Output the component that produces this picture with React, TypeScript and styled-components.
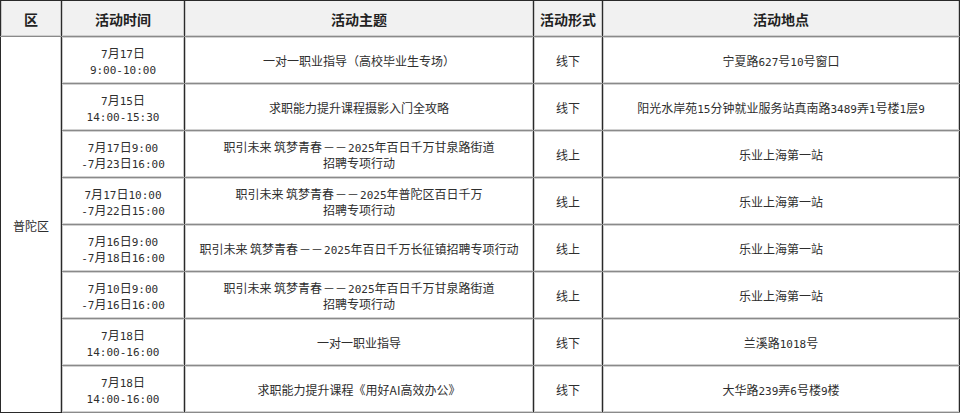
import React from "react";
import styled, { createGlobalStyle } from "styled-components";

const Global = createGlobalStyle`
  html, body { margin: 0; padding: 0; background: #fff; }
  body { font-family: "Noto Sans CJK SC", "Liberation Sans", sans-serif; }
`;

const Table = styled.table`
  width: 959px;
  border-collapse: collapse;
  table-layout: fixed;
  border: 1px solid #2a2a2a;
  color: #2e2e2e;
  font-size: 12px;
`;

const Col = styled.col<{ $w: number }>`
  width: ${(p) => p.$w}px;
`;

const Th = styled.th`
  height: 35px;
  padding: 0;
  background: #f1f1f1;
  font-size: 14px;
  font-weight: 700;
  color: #222;
  text-align: center;
  border-right: 1px solid #2a2a2a;
  border-bottom: 1px solid #8a8a8a;
  box-shadow: inset 0 -1px 0 #cfcfcf, inset 1px 0 0 #c8c8c8, inset -1px 0 0 #c8c8c8;
  &:last-child { border-right: none; }
`;

const Td = styled.td`
  height: 44px;
  padding: 2px 4px 0;
  text-align: center;
  vertical-align: middle;
  line-height: 16px;
  border-right: 1px solid #2a2a2a;
  border-bottom: 1px solid #8a8a8a;
  box-shadow: inset 0 -1px 0 #d2d2d2, inset 0 1px 0 #d2d2d2, inset 1px 0 0 #c8c8c8,
    inset -1px 0 0 #c8c8c8;
  &:last-child { border-right: none; }
`;

const DistrictCell = styled(Td)`
  box-shadow: inset -1px 0 0 #c8c8c8;
  border-bottom: none;
`;

const Line = styled.div`
  height: 16px;
  line-height: 16px;
  white-space: nowrap;
`;

const Latin = styled.span`
  font-family: "DejaVu Sans Mono", "Liberation Mono", monospace;
  font-size: 11px;
  line-height: 1;
`;

const Dash = styled.span`
  padding: 0 1px;
`;

type Row = { time: string[]; topic: string[]; mode: string; place: string };

const rows: Row[] = [
  { time: ["7月17日", "9:00-10:00"], topic: ["一对一职业指导（高校毕业生专场）"], mode: "线下", place: "宁夏路627号10号窗口" },
  { time: ["7月15日", "14:00-15:30"], topic: ["求职能力提升课程摄影入门全攻略"], mode: "线下", place: "阳光水岸苑15分钟就业服务站真南路3489弄1号楼1层9" },
  { time: ["7月17日9:00", "-7月23日16:00"], topic: ["职引未来 筑梦青春——2025年百日千万甘泉路街道", "招聘专项行动"], mode: "线上", place: "乐业上海第一站" },
  { time: ["7月17日10:00", "-7月22日15:00"], topic: ["职引未来 筑梦青春——2025年普陀区百日千万", "招聘专项行动"], mode: "线上", place: "乐业上海第一站" },
  { time: ["7月16日9:00", "-7月18日16:00"], topic: ["职引未来 筑梦青春——2025年百日千万长征镇招聘专项行动"], mode: "线上", place: "乐业上海第一站" },
  { time: ["7月10日9:00", "-7月16日16:00"], topic: ["职引未来 筑梦青春——2025年百日千万甘泉路街道", "招聘专项行动"], mode: "线上", place: "乐业上海第一站" },
  { time: ["7月18日", "14:00-16:00"], topic: ["一对一职业指导"], mode: "线下", place: "兰溪路1018号" },
  { time: ["7月18日", "14:00-16:00"], topic: ["求职能力提升课程《用好AI高效办公》"], mode: "线下", place: "大华路239弄6号楼9楼" },
];

const Mixed = ({ text }: { text: string }) => {
  const parts = text.split(/([0-9:\-]+|——)/).filter((p) => p.length > 0);
  return (
    <>
      {parts.map((p, i) =>
        p === "——" ? (
          <Dash key={i}>－－</Dash>
        ) : /^[0-9:\-]+$/.test(p) ? (
          <Latin key={i}>{p}</Latin>
        ) : (
          <React.Fragment key={i}>{p}</React.Fragment>
        )
      )}
    </>
  );
};

const Lines = ({ items }: { items: string[] }) => (
  <>
    {items.map((t, i) => (
      <Line key={i}>
        <Mixed text={t} />
      </Line>
    ))}
  </>
);

export default function App() {
  return (
    <>
      <Global />
      <Table>
        <colgroup>
          <Col $w={61} />
          <Col $w={123} />
          <Col $w={349} />
          <Col $w={69} />
          <Col $w={357} />
        </colgroup>
        <thead>
          <tr>
            <Th>区</Th>
            <Th>活动时间</Th>
            <Th>活动主题</Th>
            <Th>活动形式</Th>
            <Th>活动地点</Th>
          </tr>
        </thead>
        <tbody>
          {rows.map((r, i) => (
            <tr key={i}>
              {i === 0 && <DistrictCell rowSpan={rows.length}>普陀区</DistrictCell>}
              <Td>
                <Lines items={r.time} />
              </Td>
              <Td>
                <Lines items={r.topic} />
              </Td>
              <Td>{r.mode}</Td>
              <Td>
                <Mixed text={r.place} />
              </Td>
            </tr>
          ))}
        </tbody>
      </Table>
    </>
  );
}
